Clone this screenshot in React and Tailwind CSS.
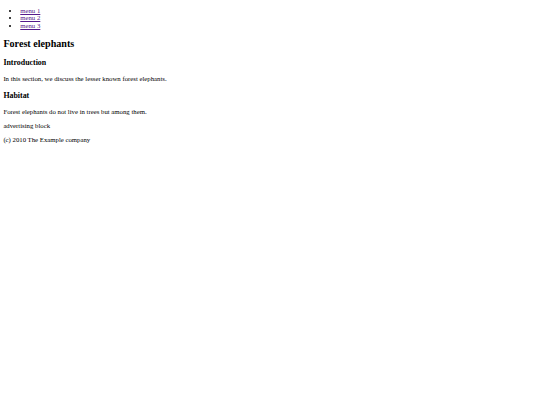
import React from 'react';

export default function App() {
  return (
    <div className="min-h-[405px] bg-white px-[3.375px] pb-[3.375px] font-['Liberation_Serif',serif] text-[6.75px] leading-[7.76px] text-black">
      {/* menu */}
      <ul className="mt-[6.5px] mb-[6.75px] list-disc pl-[16.875px]">
        <li><a href="#" className="text-[#551a8b] underline">menu 1</a></li>
        <li><a href="#" className="text-[#551a8b] underline">menu 2</a></li>
        <li><a href="#" className="text-[#551a8b] underline">menu 3</a></li>
      </ul>

      <h2 className="my-[8.4px] text-[10.125px] leading-[11.65px] font-bold">Forest elephants</h2>

      <h3 className="my-[7.9px] text-[7.9px] leading-[9.1px] font-bold">Introduction</h3>
      <p className="my-[6.75px]">In this section, we discuss the lesser known forest elephants.</p>

      <h3 className="my-[7.9px] text-[7.9px] leading-[9.1px] font-bold">Habitat</h3>
      <p className="my-[6.5px]">Forest elephants do not live in trees but among them.</p>

      <p className="my-[6.5px]">advertising block</p>
      <p className="my-[6.5px]">(c) 2010 The Example company</p>
    </div>
  );
}
